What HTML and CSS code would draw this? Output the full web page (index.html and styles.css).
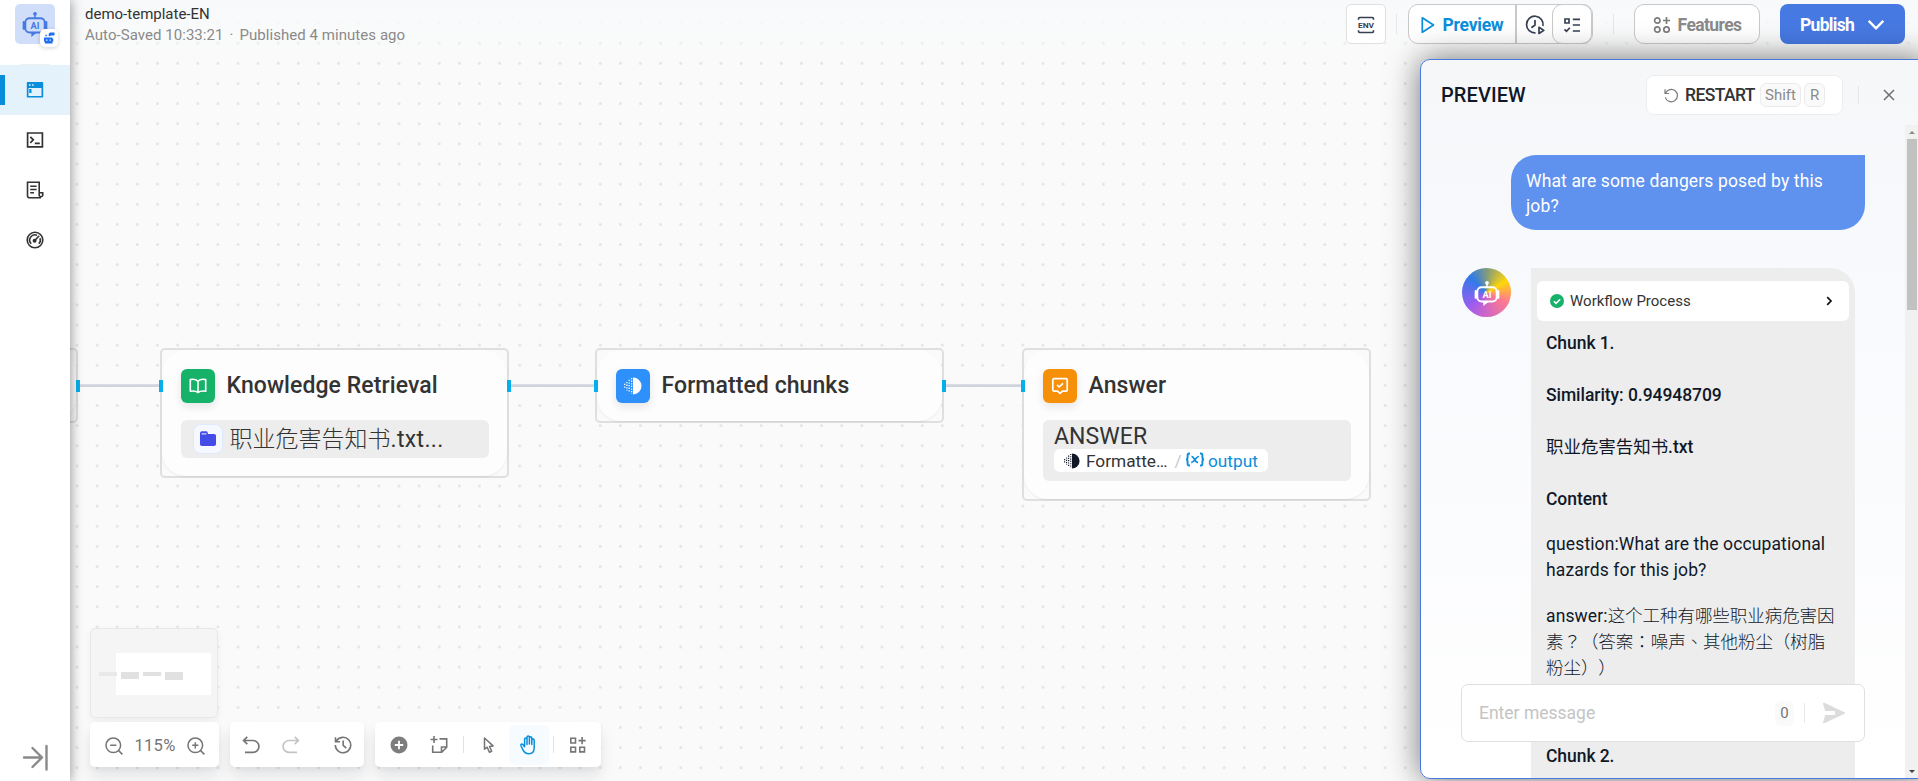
FILE: index.html
```html
<!DOCTYPE html>
<html lang="en">
<head>
<meta charset="utf-8">
<title>demo-template-EN</title>
<link rel="stylesheet" href="styles.css">
</head>
<body>
<svg width="0" height="0" class="defs">
  <symbol id="bot" viewBox="0 0 28 28">
    <circle cx="14" cy="3" r="2" fill="currentColor"/>
    <path d="M14 4v4" stroke="currentColor" stroke-width="1.6"/>
    <path d="M2 12v7M26 12v7" stroke="currentColor" stroke-width="2.6" stroke-linecap="round"/>
    <rect x="3.6" y="7.8" width="20.8" height="15.4" rx="4.5" fill="none" stroke="currentColor" stroke-width="2"/>
    <path d="M10 23v5l6.500-5z" fill="currentColor"/>
  </symbol>
  <symbol id="half" viewBox="0 0 18 18">
    <path d="M9 0.500a8.500 8.500 0 0 1 0 17z" fill="currentColor"/>
    <path d="M7.600 1v16M5.200 2.800v12.600M2.900 5v8.500M0.700 6.800v4.500" stroke="currentColor" stroke-width="1.300" stroke-dasharray="1.300 1.300" fill="none"/>
  </symbol>
</svg>
<div class="app">
  <nav class="sidebar">
    <div class="logo">
      <svg width="26" height="28" viewBox="0 0 28 28"><use href="#bot"/><text class="bot-text" x="14" y="19.300">AI</text></svg>
      <span class="logo-badge">
        <svg width="12" height="12" viewBox="0 0 12 12" fill="#1c6ef2"><path d="M1 5.500h8.500v1.200h.8V9.500h-.8v2H1.800v-2H1V6.700zM5.700 1.800 7 .6h4.500v3H8L6.800 4.300H5.700zM2.300 2.800h1.500V4.300H2.300z"/><path d="M3.200 7.500h1.300v1.300H3.200zM6.500 7.500h1.300v1.300H6.500z" fill="#fff"/></svg>
      </span>
    </div>
    <div class="side-line"></div>
    <a class="side-item active"><svg width="18" height="18" viewBox="0 0 18 18"><path fill="#0a8edc" fill-rule="evenodd" d="M1.500 1h15a.7.7 0 0 1 .7.7v14.200a.7.7 0 0 1-.7.7h-15a.7.7 0 0 1-.7-.7V1.700a.7.7 0 0 1 .7-.7zM2.500 7v8h13V7zM3 3.200v1.600h1.600V3.200zM6 3.200v1.600h1.600V3.200zM3.200 8h2.300v4H3.200z"/></svg></a>
    <a class="side-item"><svg width="18" height="18" viewBox="0 0 18 18" fill="none" stroke="#333" stroke-width="1.700"><path d="M1.600 2h14.800v13.800H1.600zM4.300 5.800 7.300 8.800 4.300 11.800M8.800 12.300h5"/></svg></a>
    <a class="side-item"><svg width="18" height="18" viewBox="0 0 18 18" fill="none" stroke="#333" stroke-width="1.600"><path d="M15 16.700H3.500a2 2 0 0 1-2-2V1.200h11.700v10.600h3.500v2.900a2 2 0 0 1-3.500 0V11M4.200 5.200h6.400M4.200 8.500h6.400M4.200 11.800h3.800"/></svg></a>
    <a class="side-item"><svg width="18" height="18" viewBox="0 0 18 18" fill="none" stroke="#333" stroke-width="1.600"><circle cx="9" cy="9" r="7.800"/><path d="M5.200 12.800A5.300 5.300 0 0 1 11 4.200M14 7.200a5.300 5.300 0 0 1-1.200 5.600M8.500 9.700l4.700-4.900"/><circle cx="8.600" cy="9.700" r="1.200" fill="#333"/></svg></a>
    <svg class="collapse" width="27" height="27" viewBox="0 0 27 27" fill="none" stroke="#8a8a8a" stroke-width="2.400" stroke-linecap="round" stroke-linejoin="round"><path d="M2 13.500h18M10.500 4l9.500 9.500-9.500 9.500M24.500 2v23.500"/></svg>
  </nav>

  <main class="canvas">
    <svg class="dots" width="1848" height="781">
      <defs><pattern id="grid" x="-3" y="-7.100" width="20.125" height="20.125" patternUnits="userSpaceOnUse"><circle cx="10" cy="10" r="1.440" fill="#e3e3e3"/></pattern></defs>
      <rect width="1848" height="781" fill="url(#grid)"/>
    </svg>
    <svg class="edges" width="1848" height="781" stroke="#d0d5dd" stroke-width="2.900"><path d="M9 385.600h82M440 385.600h85M875 385.600h77"/></svg>

    <section class="node node-prev"><i class="handle out"></i></section>

    <section class="node node-kb">
      <i class="handle in"></i><i class="handle out"></i>
      <div class="node-head">
        <span class="tile green"><svg width="18" height="18" viewBox="0 0 18 18" fill="none" stroke="#fff" stroke-width="1.600" stroke-linejoin="round"><path d="M9 4.200C7 2.200 4 2 1.300 2.600v11.700c2.800-.5 5.500-.3 7.700 1.200 2.200-1.500 4.900-1.700 7.700-1.200V2.600C14 2 11 2.200 9 4.200zM9 4v11"/></svg></span>
        <h3>Knowledge Retrieval</h3>
      </div>
      <div class="node-box kb-row">
        <span class="folder"><svg width="18" height="18" viewBox="0 0 18 18"><path d="M1 3.300C1 2 1.800 1.300 3 1.300h3.800c1 0 1.600.5 1.900 1.400l.4 1.200H15c1.300 0 2 .8 2 2v8c0 1.300-.8 2-2 2H3c-1.300 0-2-.8-2-2z" fill="#444ce7"/><path d="M2.500 3.900h5" stroke="#f5f8ff" stroke-width="1"/></svg></span>
        <span class="kb-name">职业危害告知书<span class="latin">.txt...</span></span>
      </div>
    </section>

    <section class="node node-fmt">
      <i class="handle in"></i><i class="handle out"></i>
      <div class="node-head">
        <span class="tile blue"><svg width="18" height="18"><use href="#half"/></svg></span>
        <h3>Formatted chunks</h3>
      </div>
    </section>

    <section class="node node-ans">
      <i class="handle in"></i>
      <div class="node-head">
        <span class="tile orange"><svg width="18" height="18" viewBox="0 0 18 18" fill="none" stroke="#fff" stroke-width="1.700" stroke-linejoin="round"><path d="M3 1.700h12c.7 0 1.200.5 1.200 1.200v10c0 .7-.5 1.200-1.200 1.200h-3.500L9 16.300l-2.500-2.200H3c-.7 0-1.200-.5-1.200-1.200v-10c0-.7.500-1.200 1.200-1.200zM6 7.800l2.200 2.200L12 6.300"/></svg></span>
        <h3>Answer</h3>
      </div>
      <div class="node-box ans-box">
        <div class="ans-label">ANSWER</div>
        <div class="chip"><svg width="16" height="16" color="#101828"><use href="#half"/></svg><span class="chip-src">Formatte…</span><span class="chip-slash">/</span><svg width="20" height="17" viewBox="0 0 20 17" fill="none" stroke="#0a8edc" stroke-width="1.900"><path d="M5 1.500H4.200C3 1.500 2.600 2.200 2.600 3.300v2.200c0 1.200-.5 2-1.600 2 1.100 0 1.600.8 1.600 2v2.200c0 1.100.4 1.800 1.600 1.800H5M15 1.500h.8c1.200 0 1.600.7 1.600 1.800v2.200c0 1.200.5 2 1.600 2-1.100 0-1.600.8-1.600 2v2.200c0 1.100-.4 1.800-1.600 1.800H15"/><path d="M6.500 4.600c2.900-.7 2.900 6.200 6.500 5.700M13.900 4.500C11 4 9.600 10.900 6.200 10.400" stroke-width="1.700"/></svg><span class="chip-var">output</span></div>
      </div>
    </section>

    <div class="dock">
      <div class="minimap">
        <svg width="126" height="88"><rect x="25" y="24" width="95" height="42" fill="#fff"/><g fill="#e1e1e1"><rect x="8" y="43" width="18" height="4" fill="#e9e9e9"/><rect x="30" y="43" width="18" height="7"/><rect x="52" y="43" width="18" height="4"/><rect x="74" y="43" width="18" height="8"/></g></svg>
      </div>
      <div class="bars">
        <div class="bar zoom-bar">
          <svg width="18" height="18" viewBox="0 0 18 18" fill="none" stroke="#757575" stroke-width="1.500"><circle cx="8.300" cy="8.300" r="7.300"/><path d="M13.400 13.400l4 4M5.200 8.300h6.200"/></svg>
          <span class="pct">115%</span>
          <svg width="18" height="18" viewBox="0 0 18 18" fill="none" stroke="#757575" stroke-width="1.500"><circle cx="8.300" cy="8.300" r="7.300"/><path d="M13.400 13.400l4 4M5.200 8.300h6.200M8.300 5.200v6.200"/></svg>
        </div>
        <div class="bar undo-bar">
          <svg width="18" height="18" viewBox="0 0 18 18" fill="none" stroke="#757575" stroke-width="1.700"><path d="M2 4.500h9a5.700 5.700 0 0 1 0 11.900H3M5.300.8 1.600 4.500l3.700 3.700"/></svg>
          <svg class="redo" width="18" height="18" viewBox="0 0 18 18" fill="none" stroke="#c4c4c4" stroke-width="1.700"><path d="M16 4.500H7a5.700 5.700 0 0 0 0 11.900h8M12.700.8l3.700 3.700-3.700 3.700"/></svg>
          <i class="sep"></i>
          <svg width="18" height="18" viewBox="0 0 18 18" fill="none" stroke="#757575" stroke-width="1.600"><path d="M2.300 5.200A7.700 7.700 0 1 1 1.300 9M1.500 1.200v4.600H6M9.200 4.600v4.800l3 2.800"/></svg>
        </div>
        <div class="bar tool-bar">
          <svg width="18" height="18" viewBox="0 0 18 18"><circle cx="9" cy="9" r="8.500" fill="#7d7d7d"/><path d="M9 4.800v8.400M4.800 9h8.400" stroke="#fff" stroke-width="1.800"/></svg>
          <svg class="t2" width="18" height="18" viewBox="0 0 18 18" fill="none" stroke="#757575" stroke-width="1.600"><path d="M9.500 2.900h7.200v8.300l-5 5H2.700V9.500M16.700 11h-5.200v5.200M4 0v7M.5 3.500h7"/></svg>
          <i class="sep s1"></i>
          <svg class="t3" width="18" height="18" viewBox="0 0 18 18" fill="none" stroke="#757575" stroke-width="1.500" stroke-linejoin="round"><path d="M4.500 2v11.200l2.700-2 2.200 5 2.300-1-2.200-4.800 3.600-.5z"/></svg>
          <span class="hand"><svg width="20" height="20" viewBox="0 0 20 20" fill="none" stroke="#0a8edc" stroke-width="1.500" stroke-linecap="round" stroke-linejoin="round"><path d="M5.600 11.700V4.200a1.200 1.200 0 0 1 2.400 0V9.500M8 9V2.300a1.200 1.200 0 0 1 2.400 0V9M10.400 9V3a1.200 1.200 0 0 1 2.400 0v6.500M12.800 9V5.200a1.200 1.200 0 0 1 2.400 0v7.300c0 4-2.200 6.300-5.400 6.300-3.200 0-4.800-1.700-6-4.100L1.900 10.500c-.5-1.200 1-2.100 2-1l1.700 2.200"/></svg></span>
          <i class="sep s2"></i>
          <svg class="t5" width="18" height="18" viewBox="0 0 18 18" fill="none" stroke="#757575" stroke-width="1.600"><path d="M1.800 2.300h4.700V7H1.800zM1.800 11.200h4.700v4.700H1.800zM10.800 11.200h4.700v4.700h-4.700zM13.100 1v7.200M9.500 4.600h7.200"/></svg>
        </div>
      </div>
    </div>

    <span class="attribution">React Flow</span>

    <header class="topbar">
      <div class="titles">
        <div class="title">demo-template-EN</div>
        <div class="subtitle">Auto-Saved 10:33:21<span class="mid">·</span>Published 4 minutes ago</div>
      </div>
      <div class="actions">
        <button class="env"><svg width="18" height="18" viewBox="0 0 18 18" fill="none" stroke="#354052" stroke-width="1.600"><path d="M1.500 3.800V2.700C1.500 2 2 1.500 2.700 1.500h12.600c.7 0 1.200.5 1.200 1.200v1.100M1.500 14.200v1.100c0 .7.500 1.200 1.200 1.200h12.600c.7 0 1.200-.5 1.200-1.200v-1.100"/><text class="env-text" x="9" y="11.900" textLength="16" lengthAdjust="spacingAndGlyphs">ENV</text></svg></button>
        <i class="tsep a"></i>
        <div class="run-group">
          <button class="run"><svg width="14" height="18" viewBox="0 0 14 18" fill="none" stroke="#0a8edc" stroke-width="1.700" stroke-linejoin="round"><path d="M1.300 1.800v14.400L12.500 9z"/></svg>Preview</button>
          <button class="history"><svg width="20" height="20" viewBox="0 0 20 20" fill="none" stroke="#354052" stroke-width="1.700" stroke-linejoin="round"><path d="M10.500 17.800A8.300 8.300 0 1 1 18 11M10 5v5l-3.600 2.700M14 12.300v6.200l4.800-3.100z"/></svg></button>
          <button class="check"><svg width="18" height="18" viewBox="0 0 18 18" fill="none" stroke="#354052" stroke-width="1.700"><path d="M2 3h4v4H2zM9.800 3.300H17M9.800 9H17M9.800 15H17M1.500 13.300l2 2 3.300-3.600"/></svg></button>
        </div>
        <i class="tsep b"></i>
        <button class="features"><svg width="18" height="18" viewBox="0 0 18 18" fill="none" stroke="#7c7c7c" stroke-width="1.700"><circle cx="4.300" cy="4.500" r="2.700"/><circle cx="4.300" cy="13.500" r="2.700"/><circle cx="13.500" cy="13.500" r="2.700"/><path d="M13.500 1v7M10 4.500h7"/></svg>Features</button>
        <button class="publish">Publish<svg width="18" height="12" viewBox="0 0 18 12" fill="none" stroke="#fff" stroke-width="2.400"><path d="M1.700 1.800 9 9.300l7.300-7.500"/></svg></button>
      </div>
    </header>

    <aside class="panel">
      <div class="panel-head">
        <h2>PREVIEW</h2>
        <button class="restart"><svg width="15" height="15" viewBox="0 0 15 15" fill="none" stroke="#7c7c7c" stroke-width="1.200"><path d="M1.500 5.300a6.200 6.200 0 1 1-.2 4M1 1.300v4.200h4.200"/></svg><span class="restart-label">RESTART</span><kbd>Shift</kbd><kbd class="r">R</kbd></button>
        <i class="psep"></i>
        <svg class="close" width="12" height="12" viewBox="0 0 12 12" stroke="#6f6f6f" stroke-width="1.500"><path d="M1 1l10 10M11 1 1 11"/></svg>
      </div>
      <div class="chat">
        <div class="user-msg">What are some dangers posed by this job?</div>
        <div class="reply">
          <div class="avatar"><svg width="26" height="28" viewBox="0 0 28 28" color="#fff"><use href="#bot"/><text class="bot-text" x="14" y="19.300">AI</text></svg></div>
          <div class="bot-msg">
            <div class="wf"><svg width="14" height="14" viewBox="0 0 14 14"><circle cx="7" cy="7" r="7" fill="#17b26a"/><path d="M3.800 7.200l2.200 2.200 4.200-4.200" fill="none" stroke="#fff" stroke-width="1.500"/></svg><span>Workflow Process</span><svg class="chev" width="7" height="10" viewBox="0 0 7 10" fill="none" stroke="#111" stroke-width="1.700"><path d="M1.200 1.200 5 5 1.200 8.800"/></svg></div>
            <div class="md">
              <p class="b">Chunk 1.</p>
              <p class="b">Similarity: 0.94948709</p>
              <p class="b"><span class="cn">职业危害告知书</span>.txt</p>
              <p class="b">Content</p>
              <p>question:What are the occupational hazards for this job?</p>
              <p>answer:<span class="zh">这个工种有哪些职业病危害因素？（答案：噪声、其他粉尘（树脂粉尘））</span></p>
              <p class="b next">Chunk 2.</p>
            </div>
          </div>
        </div>
      </div>
      <div class="input"><span class="ph">Enter message</span><span class="count">0</span><i class="isep"></i><svg width="24" height="22" viewBox="0 0 24 22"><path d="M1 1.500C1 .8 1.600.5 2.300.8L22.500 10.300c.7.400.7 1 0 1.400L2.300 21.200c-.7.300-1.300 0-1.300-.7l2.200-7.500H13v-4H3.200z" fill="#dcdcdc"/><path d="M3 11h10" stroke="#fff" stroke-width="1.800"/></svg></div>
      <div class="scroll"><i class="up"></i><i class="thumb"></i><i class="down"></i></div>
    </aside>
  </main>
</div>
</body>
</html>
```
FILE: styles.css
```css
* { box-sizing: border-box; }
body { margin: 0; width: 1918px; height: 781px; overflow: hidden; font-family: Roboto, "Noto Sans CJK TC", "Noto Sans CJK SC", sans-serif; font-size: 17.5px; color: #333; background: #fafafa; }
h2, h3, p { margin: 0; }
button { font: inherit; color: inherit; padding: 0; background: #fff; border: 0; display: flex; align-items: center; }
svg { display: block; flex: none; }
.defs { position: absolute; }
.app { display: flex; height: 781px; }
.bot-text { font-size: 10px; font-weight: 700; text-anchor: middle; fill: currentColor; }
.env-text { font-size: 8px; font-weight: 700; text-anchor: middle; fill: #354052; stroke: none; }

/* sidebar */
.sidebar { position: relative; z-index: 3; flex: none; width: 70px; background: #fff; box-shadow: 0 0 12px rgba(0,0,0,.45); display: flex; flex-direction: column; align-items: center; padding-top: 4px; }
.logo { position: relative; width: 40px; height: 40px; border-radius: 5px; background: #d1defa; color: #4679e2; display: flex; justify-content: center; padding-top: 6px; }
.logo-badge { position: absolute; left: 25px; top: 25px; width: 18px; height: 18px; border-radius: 5px; background: #fff; box-shadow: 0 1px 4px rgba(0,0,0,.18); display: flex; align-items: center; justify-content: center; }
.side-line { width: 30px; height: 1px; background: #f0f0f0; margin-top: 20px; }
.side-item { width: 70px; height: 50px; display: flex; align-items: center; justify-content: center; }
.side-item.active { background: linear-gradient(#0a8edc, #0a8edc) 0 10px / 5px 30px no-repeat #e4f3fb; }
.collapse { margin-top: auto; margin-bottom: 10px; }

/* canvas */
.canvas { position: relative; flex: 1; overflow: hidden; background: #fafafa; }
.dots, .edges { position: absolute; left: 0; top: 0; }
.node { position: absolute; top: 348px; width: 349px; border: 2px solid #dfdfdf; border-radius: 5px; padding: 18px 18.500px 0; }
.node::before { content: ""; position: absolute; inset: 0; z-index: 0; border-radius: 24px; background: #fdfdfd; box-shadow: 0 1px 2px rgba(16,24,40,.06); }
.node > div { position: relative; }
.node-prev { left: -341px; height: 75px; }
.node-kb { left: 90px; height: 130px; }
.node-fmt { left: 525px; height: 75px; }
.node-ans { left: 952px; height: 153px; }
.handle { position: absolute; z-index: 2; top: 30px; width: 4px; height: 12px; background: #06aeea; }
.handle.in { left: -3px; }
.handle.out { right: -4px; }
.node-head { display: flex; align-items: center; gap: 12px; height: 35px; }
.node-head h3 { font-size: 23px; font-weight: 500; line-height: 34px; letter-spacing: .08px; white-space: nowrap; color: #333; }
.tile { width: 34px; height: 34px; flex: none; border-radius: 6px; display: flex; align-items: center; justify-content: center; box-shadow: 0 4px 8px rgba(16,24,40,.1); }
.green { background: #17b26a; }
.blue { background: #2e90fa; color: #fff; }
.orange { background: #f79009; }
.node-box { margin-top: 17px; width: 308px; border-radius: 6px; background: #ededed; font-size: 23px; }
.kb-row { height: 38px; display: flex; align-items: center; gap: 7px; padding-left: 12px; white-space: nowrap; font-weight: 300; }
.kb-name { line-height: 36px; padding-top: 2px; }
.latin { font-weight: 400; letter-spacing: .35px; }
.folder { width: 30px; height: 30px; border-radius: 8px; background: #f5f8ff; border: 1px solid #e0eaff; display: flex; align-items: center; justify-content: center; }
.ans-box { height: 61px; padding: 4px 11.500px; }
.ans-label { line-height: 26px; letter-spacing: .1px; }
.chip { width: 214px; height: 23px; margin-top: -1px; border-radius: 6px; background: #fff; display: flex; align-items: center; padding-left: 10px; font-size: 17.250px; white-space: nowrap; }
.chip-src { margin-left: 6px; width: 83px; }
.chip-slash { color: #c5c9d0; width: 8px; margin: 0 3px 0 5px; text-align: center; }
.chip-var { color: #0a8edc; margin-left: 3px; }

/* bottom-left controls */
.dock { position: absolute; left: 20px; top: 628px; }
.minimap { width: 128px; height: 90px; border: 1px solid #e8e8e8; border-radius: 5px; background: #f5f5f5; box-shadow: 0 4px 8px rgba(16,24,40,.05); }
.bars { display: flex; gap: 11px; margin-top: 4px; }
.bar { height: 45px; background: #fff; border-radius: 5px; box-shadow: 0 10px 16px rgba(16,24,40,.09), 0 3px 5px rgba(16,24,40,.04); display: flex; align-items: center; color: #757575; }
.zoom-bar { width: 129px; padding: 2px 14px 0 15px; justify-content: space-between; }
.pct { font-size: 16.500px; letter-spacing: .3px; }
.undo-bar { width: 134px; padding: 0 12px; }
.redo { margin-left: 22px; }
.sep { width: 1px; height: 17px; background: #e2e2e2; margin: 0 16px 0 18px; }
.tool-bar { width: 226px; padding-left: 15px; }
.t2 { margin-left: 22px; }
.s1 { margin: 0 16px 0 15px; }
.hand { width: 40px; height: 40px; border-radius: 5px; background: #f5fbff; margin-left: 11px; display: flex; align-items: center; justify-content: center; }
.s2 { margin: 0 15px 0 4px; }
.attribution { position: absolute; right: 0; top: 767px; font-size: 13px; line-height: 14px; color: #777; white-space: nowrap; }

/* header */
.topbar { position: absolute; left: 0; right: 0; top: 0; height: 60px; display: flex; justify-content: space-between; padding: 4px 13px 0 15px; background: linear-gradient(rgba(247,249,251,1), rgba(249,250,251,.75) 50%, rgba(250,250,250,0)); }
.titles { font-size: 15px; }
.title { line-height: 20px; color: #333; }
.subtitle { line-height: 22px; color: #8a8a8a; letter-spacing: .05px; }
.mid { margin: 0 6px; }
.actions { display: flex; align-items: flex-start; font-weight: 700; }
.actions button { height: 40px; justify-content: center; padding-top: 1px; }
.env { width: 40px; border: 1px solid #e0e0e0; border-radius: 5px; }
.tsep { width: 1px; height: 20px; margin-top: 10px; background: #e6e6e6; }
.tsep.a { margin-left: 10px; margin-right: 11px; }
.tsep.b { margin: 10px 20px 0; }
.run-group { display: flex; width: 185px; height: 40px; border: 1px solid #c9c9c9; border-radius: 10px; background: #fff; }
.run-group button { height: 38px; background: none; }
.run { width: 108px; gap: 8px; color: #0a8edc; border-right: 2px solid #c9c9c9; letter-spacing: -.25px; }
.history { width: 36px; }
.run-group .check { width: 40px; height: 40px; margin: -1px; border: 1px solid #c9c9c9; border-radius: 10px; }
.features { width: 126px; gap: 7px; color: #8a8a8a; border: 1px solid #c9c9c9; border-radius: 10px; letter-spacing: -.6px; }
.publish { width: 125px; gap: 13px; margin-left: 20px; border-radius: 8px; background: #4679e2; color: #fff; letter-spacing: -.7px; }

/* preview panel */
.panel { position: absolute; left: 1350px; top: 59px; width: 510px; height: 720px; border: 1px solid #4679e2; border-radius: 10px; background: linear-gradient(180deg, #f6f7f9, #f9fafd 40%, #fff); box-shadow: 0 0 32px rgba(0,0,0,.55); overflow: hidden; }
.panel-head { height: 65px; display: flex; align-items: flex-start; padding: 15px 0 0 20px; }
.panel-head h2 { width: 205px; font-size: 20px; font-weight: 500; line-height: 40px; letter-spacing: .1px; color: #101828; }
.restart { width: 197px; height: 40px; border: 1px solid #ededed; border-radius: 8px; padding-left: 17px; font-weight: 500; }
.restart svg { margin-right: 6px; }
.restart-label { width: 70px; letter-spacing: -.6px; }
kbd { height: 24px; width: 41px; margin-left: 5px; border: 1px solid #ebebeb; border-radius: 6px; background: #fafafa; color: #8a8a8a; font: 400 15px/22px Roboto, sans-serif; text-align: center; }
kbd.r { width: 21px; margin-left: 3px; }
.psep { width: 1px; height: 18px; margin: 11px 24px 0 15px; background: #e6e6e6; }
.close { margin-top: 14px; }
.chat { height: 653px; overflow: hidden; padding: 30px 64px 0 41px; color: #101828; }
.user-msg { margin-left: auto; width: 354px; height: 75px; padding: 14px 15px 10px; border-radius: 25px 0 25px 25px; background: #5f91ee; color: #fff; line-height: 25px; letter-spacing: .13px; }
.reply { display: flex; gap: 20px; margin-top: 38px; }
.avatar { flex: none; width: 49px; height: 49px; border-radius: 50%; background: conic-gradient(from 0deg, #7f9a80, #ffd60a 60deg, #ff7a90 115deg, #c864cc 190deg, #9b5cf0 230deg, #2f7be8 315deg, #7f9a80); display: flex; justify-content: center; padding-top: 11px; }
.bot-msg { flex: none; width: 324px; background: #ededed; border-radius: 0 25px 0 0; padding: 13px 6px 0; }
.wf { height: 40px; background: #fff; border-radius: 6px; display: flex; align-items: center; padding: 0 16px 0 13px; font-size: 15px; color: #333; }
.wf span { margin-left: 6px; }
.chev { margin-left: auto; }
.md { padding: 9px 9px 0; line-height: 26px; letter-spacing: .12px; }
.md p { margin-bottom: 20px; }
.md .b { font-weight: 500; margin-bottom: 26px; letter-spacing: -.06px; }
.md .cn { font-weight: 400; }
.md .zh { font-weight: 300; letter-spacing: -.05px; text-spacing-trim: space-all; }
.md .b + p:not(.b) { margin-top: -7px; }
.md .next { margin-top: 62px; }
.input { position: absolute; left: 40px; top: 624px; width: 404px; height: 58px; border: 1px solid #e0e0e0; border-radius: 7px; background: #fff; display: flex; align-items: center; padding-left: 17px; }
.ph { color: #c4c4c4; width: 296px; }
.count { width: 19px; height: 25px; border-radius: 6px; background: #fafafa; color: #757575; font-size: 15px; line-height: 25px; text-align: center; }
.isep { width: 1px; height: 20px; margin: 0 17px 0 10px; background: #e8e8e8; }
.scroll { position: absolute; left: 484px; top: 65px; width: 13px; bottom: 0; background: #f1f1f1; display: flex; flex-direction: column; align-items: center; }
.up { margin-top: 6px; border: 3px solid transparent; border-top: 0; border-bottom-color: #8a8a8a; }
.thumb { width: 10px; height: 171px; margin-top: 5px; background: #c1c1c1; }
.down { margin: auto 0 5px; border: 3px solid transparent; border-bottom: 0; border-top-color: #404040; }
```
